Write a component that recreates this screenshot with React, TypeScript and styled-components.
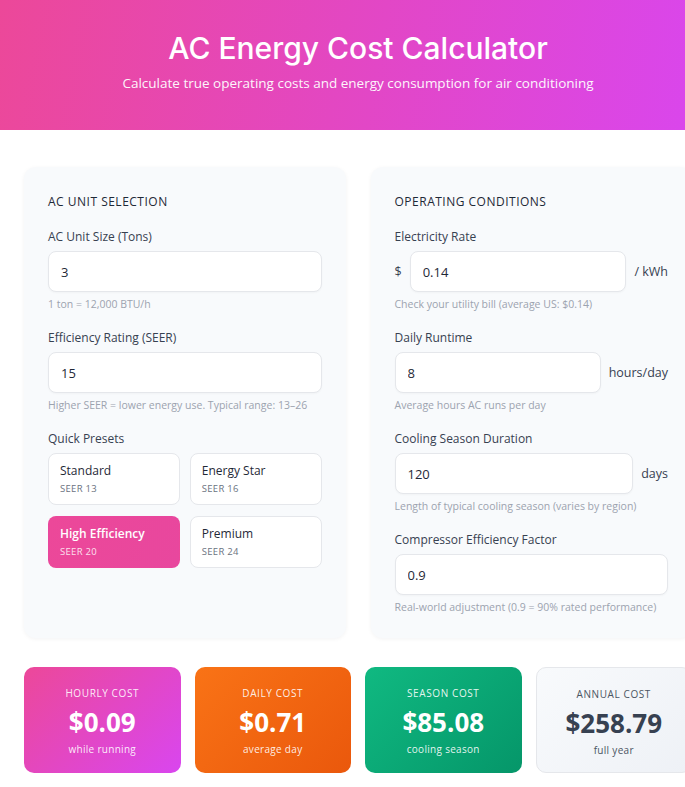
import React, { useState } from "react";
import styled, { createGlobalStyle, css } from "styled-components";

const Global = createGlobalStyle`
  * { box-sizing: border-box; }
  html, body { margin: 0; padding: 0; overflow: hidden; background: #ffffff; }
  body { font-family: "Open Sans", "Liberation Sans", sans-serif; color: #1f2937; }
`;

const Page = styled.div`
  width: 716px;
  min-height: 787px;
  background: #ffffff;
`;

const Header = styled.header`
  height: 130px;
  background: linear-gradient(100deg, #ec4899 0%, #d946ef 100%);
  color: #ffffff;
  display: flex;
  flex-direction: column;
  align-items: center;
  padding-top: 28px;
`;

const Title = styled.h1`
  margin: 0;
  font-family: "Inter", "Open Sans", sans-serif;
  font-size: 30px;
  font-weight: 500;
  line-height: 40px;
`;

const Subtitle = styled.p`
  margin: 6px 0 0;
  font-size: 13.5px;
  line-height: 18px;
  opacity: 0.95;
`;

const Main = styled.main`
  padding: 37px 24px 24px;
  display: flex;
  flex-direction: column;
  gap: 29px;
`;

const Panels = styled.div`
  display: grid;
  grid-template-columns: 1fr 1fr;
  gap: 25px;
`;

const Panel = styled.section`
  background: #f8fafc;
  border-radius: 12px;
  box-shadow: 0 1px 4px rgba(15, 23, 42, 0.05);
  padding: 25px 24px 24px;
  display: flex;
  flex-direction: column;
`;

const PanelTitle = styled.h2`
  margin: 0 0 17px;
  font-size: 12px;
  line-height: 20px;
  font-weight: 500;
  letter-spacing: 0.5px;
  text-transform: uppercase;
  color: #1f2937;
`;

const Field = styled.div`
  display: flex;
  flex-direction: column;
  gap: 6px;
  & + & { margin-top: 19px; }
`;

const Label = styled.label`
  font-size: 12px;
  line-height: 16px;
  font-weight: 500;
  color: #374151;
`;

const InputRow = styled.div`
  display: flex;
  align-items: center;
  gap: 8px;
  & > input { flex: 1 1 auto; }
`;

const Affix = styled.span`
  font-size: 12.5px;
  font-weight: 500;
  color: #374151;
  white-space: nowrap;
`;

const Input = styled.input`
  flex: 0 0 auto;
  min-width: 0;
  width: 100%;
  height: 41px;
  border: 1px solid #e5e7eb;
  border-radius: 8px;
  background: #ffffff;
  padding: 0 12px;
  font-family: "Open Sans", "Liberation Sans", sans-serif;
  font-size: 13px;
  color: #1f2937;
  outline: none;
  box-shadow: 0 1px 2px rgba(0, 0, 0, 0.03);
`;

const Hint = styled.div`
  font-size: 10.5px;
  line-height: 13px;
  color: #9ca3af;
`;

const PresetGrid = styled.div`
  display: grid;
  grid-template-columns: 1fr 1fr;
  gap: 11px 10px;
`;

const Preset = styled.button<{ $active?: boolean }>`
  height: 52px;
  text-align: left;
  border-radius: 8px;
  border: 1px solid #e5e7eb;
  background: #ffffff;
  padding: 0 11px;
  display: flex;
  flex-direction: column;
  justify-content: center;
  gap: 5px;
  font-family: "Open Sans", "Liberation Sans", sans-serif;
  cursor: pointer;
  ${(p) =>
    p.$active &&
    css`
      border-color: transparent;
      background: linear-gradient(110deg, #ec4899 0%, #e8479e 100%);
    `}
`;

const PresetName = styled.span<{ $active?: boolean }>`
  font-size: 12px;
  line-height: 15px;
  font-weight: ${(p) => (p.$active ? 600 : 500)};
  color: ${(p) => (p.$active ? "#ffffff" : "#1f2937")};
`;

const PresetSeer = styled.span<{ $active?: boolean }>`
  font-size: 9.5px;
  line-height: 12px;
  letter-spacing: 0.3px;
  color: ${(p) => (p.$active ? "rgba(255,255,255,0.85)" : "#6b7280")};
`;

const Cards = styled.div`
  display: grid;
  grid-template-columns: repeat(4, 1fr);
  gap: 14px;
`;

type Tone = "pink" | "orange" | "green" | "light";

const toneBg: Record<Tone, string> = {
  pink: "linear-gradient(135deg, #ec4899 0%, #d946ef 100%)",
  orange: "linear-gradient(135deg, #f97316 0%, #ea580c 100%)",
  green: "linear-gradient(135deg, #10b981 0%, #059669 100%)",
  light: "linear-gradient(135deg, #f8fafc 0%, #eef1f6 100%)",
};

const Card = styled.div<{ $tone: Tone }>`
  height: 106px;
  border-radius: 10px;
  background: ${(p) => toneBg[p.$tone]};
  border: ${(p) => (p.$tone === "light" ? "1px solid #e5e7eb" : "none")};
  color: ${(p) => (p.$tone === "light" ? "#374151" : "#ffffff")};
  display: flex;
  flex-direction: column;
  align-items: center;
  padding-top: 19px;
`;

const CardLabel = styled.div<{ $light?: boolean }>`
  font-size: 10px;
  line-height: 14px;
  font-weight: 500;
  letter-spacing: 0.6px;
  text-transform: uppercase;
  color: ${(p) => (p.$light ? "#4b5563" : "rgba(255,255,255,0.9)")};
`;

const CardValue = styled.div<{ $light?: boolean }>`
  margin-top: 5px;
  font-size: 26px;
  line-height: 34px;
  font-weight: 700;
  color: ${(p) => (p.$light ? "#374151" : "#ffffff")};
`;

const CardSub = styled.div<{ $light?: boolean }>`
  margin-top: 3px;
  font-size: 10px;
  line-height: 14px;
  letter-spacing: 0.3px;
  color: ${(p) => (p.$light ? "#4b5563" : "rgba(255,255,255,0.9)")};
`;

const presets = [
  { name: "Standard", seer: 13 },
  { name: "Energy Star", seer: 16 },
  { name: "High Efficiency", seer: 20 },
  { name: "Premium", seer: 24 },
];

const results: { tone: Tone; label: string; value: string; sub: string }[] = [
  { tone: "pink", label: "Hourly Cost", value: "$0.09", sub: "while running" },
  { tone: "orange", label: "Daily Cost", value: "$0.71", sub: "average day" },
  { tone: "green", label: "Season Cost", value: "$85.08", sub: "cooling season" },
  { tone: "light", label: "Annual Cost", value: "$258.79", sub: "full year" },
];

export default function App() {
  const [active, setActive] = useState("High Efficiency");
  return (
    <Page>
      <Global />
      <Header>
        <Title>AC Energy Cost Calculator</Title>
        <Subtitle>Calculate true operating costs and energy consumption for air conditioning</Subtitle>
      </Header>
      <Main>
        <Panels>
          <Panel>
            <PanelTitle>AC Unit Selection</PanelTitle>
            <Field>
              <Label>AC Unit Size (Tons)</Label>
              <Input defaultValue="3" />
              <Hint>1 ton = 12,000 BTU/h</Hint>
            </Field>
            <Field>
              <Label>Efficiency Rating (SEER)</Label>
              <Input defaultValue="15" />
              <Hint>Higher SEER = lower energy use. Typical range: 13–26</Hint>
            </Field>
            <Field>
              <Label>Quick Presets</Label>
              <PresetGrid>
                {presets.map((p) => {
                  const on = p.name === active;
                  return (
                    <Preset key={p.name} $active={on} onClick={() => setActive(p.name)}>
                      <PresetName $active={on}>{p.name}</PresetName>
                      <PresetSeer $active={on}>SEER {p.seer}</PresetSeer>
                    </Preset>
                  );
                })}
              </PresetGrid>
            </Field>
          </Panel>
          <Panel>
            <PanelTitle>Operating Conditions</PanelTitle>
            <Field>
              <Label>Electricity Rate</Label>
              <InputRow>
                <Affix>$</Affix>
                <Input defaultValue="0.14" />
                <Affix>/ kWh</Affix>
              </InputRow>
              <Hint>Check your utility bill (average US: $0.14)</Hint>
            </Field>
            <Field>
              <Label>Daily Runtime</Label>
              <InputRow>
                <Input defaultValue="8" />
                <Affix>hours/day</Affix>
              </InputRow>
              <Hint>Average hours AC runs per day</Hint>
            </Field>
            <Field>
              <Label>Cooling Season Duration</Label>
              <InputRow>
                <Input defaultValue="120" />
                <Affix>days</Affix>
              </InputRow>
              <Hint>Length of typical cooling season (varies by region)</Hint>
            </Field>
            <Field>
              <Label>Compressor Efficiency Factor</Label>
              <Input defaultValue="0.9" />
              <Hint>Real-world adjustment (0.9 = 90% rated performance)</Hint>
            </Field>
          </Panel>
        </Panels>
        <Cards>
          {results.map((r) => {
            const light = r.tone === "light";
            return (
              <Card key={r.label} $tone={r.tone}>
                <CardLabel $light={light}>{r.label}</CardLabel>
                <CardValue $light={light}>{r.value}</CardValue>
                <CardSub $light={light}>{r.sub}</CardSub>
              </Card>
            );
          })}
        </Cards>
      </Main>
    </Page>
  );
}
